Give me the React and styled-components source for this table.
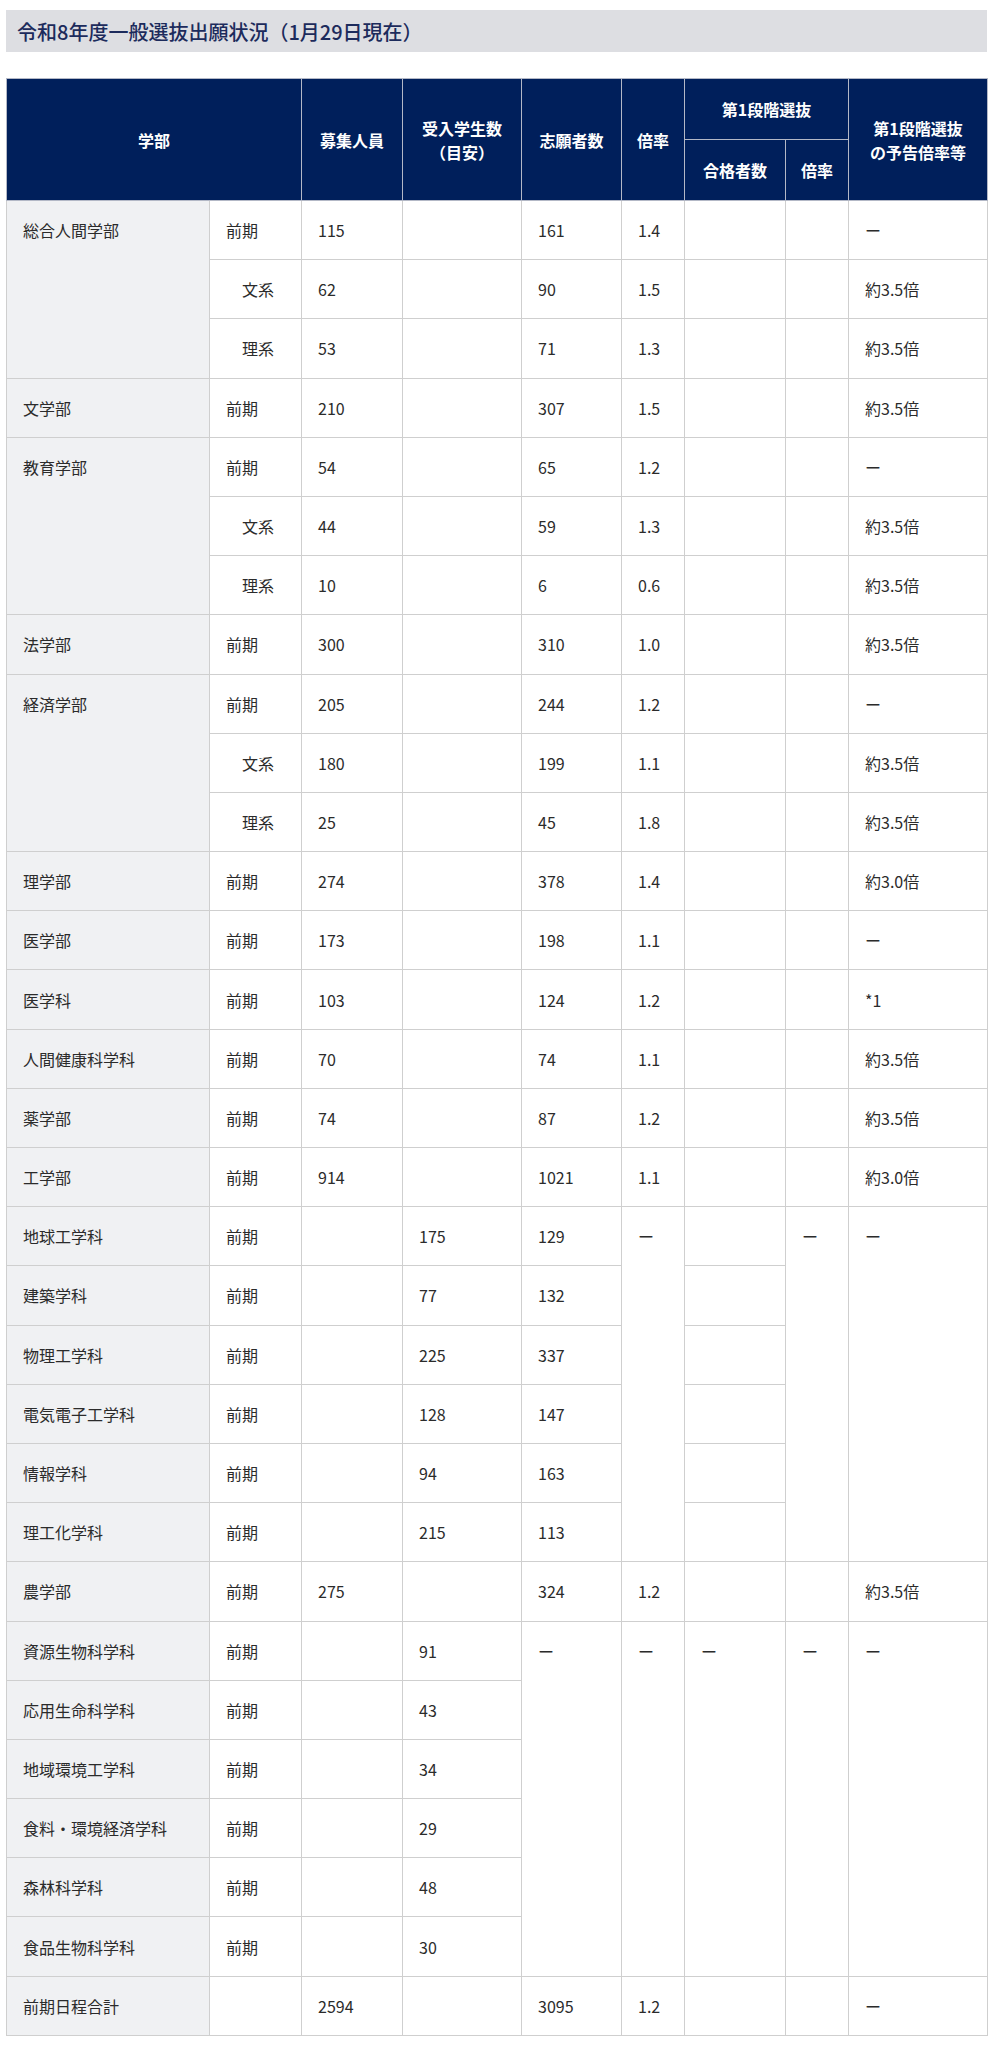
import React from 'react';
import styled, { createGlobalStyle } from 'styled-components';

const Global = createGlobalStyle`
  html, body { margin: 0; padding: 0; background: #fff; }
  body { font-family: "Noto Sans CJK JP", "Noto Sans", sans-serif; color: #333; }
`;

const Page = styled.div`
  width: 981px;
  padding: 10px 9px 14px 6px;
`;

const TitleBar = styled.h2`
  margin: 0 0 26px;
  height: 42px;
  display: flex;
  align-items: center;
  padding: 0 11px;
  background: #dddee2;
  color: #1c2b5c;
  font-size: 20px;
  font-weight: 500;
  letter-spacing: 0;
`;

const Table = styled.table`
  width: 981px;
  table-layout: fixed;
  border-collapse: collapse;
  font-size: 16px;
  line-height: 24px;
`;

const Th = styled.th`
  background: #001f5b;
  color: #fff;
  font-weight: 700;
  text-align: center;
  vertical-align: middle;
  padding: 18px 6px;
  border: 1px solid #b3b8c6;
`;

const Td = styled.td`
  background: ${(p) => (p.$name ? '#f0f1f3' : '#fff')};
  color: #2b2b2b;
  text-align: left;
  vertical-align: top;
  padding: 17.1px 16px 17.1px ${(p) => (p.$indent ? '32px' : '16px')};
  border: 1px solid #cfcfcf;
  white-space: nowrap;
`;

const widths = [203, 92, 101, 119, 100, 63, 101, 63, 139];

const D = 'ー';
const A = '約3.5倍';
const B = '約3.0倍';

const c = (t, o = {}) => ({ t, ...o });

const std = (name, vals) => [c(name, { name: true }), c('前期'), ...vals.map((v) => c(v))];

const rows = [
  [c('総合人間学部', { name: true, rs: 3 }), c('前期'), c('115'), c(''), c('161'), c('1.4'), c(''), c(''), c(D)],
  [c('文系', { indent: true }), c('62'), c(''), c('90'), c('1.5'), c(''), c(''), c(A)],
  [c('理系', { indent: true }), c('53'), c(''), c('71'), c('1.3'), c(''), c(''), c(A)],
  std('文学部', ['210', '', '307', '1.5', '', '', A]),
  [c('教育学部', { name: true, rs: 3 }), c('前期'), c('54'), c(''), c('65'), c('1.2'), c(''), c(''), c(D)],
  [c('文系', { indent: true }), c('44'), c(''), c('59'), c('1.3'), c(''), c(''), c(A)],
  [c('理系', { indent: true }), c('10'), c(''), c('6'), c('0.6'), c(''), c(''), c(A)],
  std('法学部', ['300', '', '310', '1.0', '', '', A]),
  [c('経済学部', { name: true, rs: 3 }), c('前期'), c('205'), c(''), c('244'), c('1.2'), c(''), c(''), c(D)],
  [c('文系', { indent: true }), c('180'), c(''), c('199'), c('1.1'), c(''), c(''), c(A)],
  [c('理系', { indent: true }), c('25'), c(''), c('45'), c('1.8'), c(''), c(''), c(A)],
  std('理学部', ['274', '', '378', '1.4', '', '', B]),
  std('医学部', ['173', '', '198', '1.1', '', '', D]),
  std('医学科', ['103', '', '124', '1.2', '', '', '*1']),
  std('人間健康科学科', ['70', '', '74', '1.1', '', '', A]),
  std('薬学部', ['74', '', '87', '1.2', '', '', A]),
  std('工学部', ['914', '', '1021', '1.1', '', '', B]),
  [c('地球工学科', { name: true }), c('前期'), c(''), c('175'), c('129'), c(D, { rs: 6 }), c(''), c(D, { rs: 6 }), c(D, { rs: 6 })],
  [c('建築学科', { name: true }), c('前期'), c(''), c('77'), c('132'), c('')],
  [c('物理工学科', { name: true }), c('前期'), c(''), c('225'), c('337'), c('')],
  [c('電気電子工学科', { name: true }), c('前期'), c(''), c('128'), c('147'), c('')],
  [c('情報学科', { name: true }), c('前期'), c(''), c('94'), c('163'), c('')],
  [c('理工化学科', { name: true }), c('前期'), c(''), c('215'), c('113'), c('')],
  std('農学部', ['275', '', '324', '1.2', '', '', A]),
  [c('資源生物科学科', { name: true }), c('前期'), c(''), c('91'), c(D, { rs: 6 }), c(D, { rs: 6 }), c(D, { rs: 6 }), c(D, { rs: 6 }), c(D, { rs: 6 })],
  [c('応用生命科学科', { name: true }), c('前期'), c(''), c('43')],
  [c('地域環境工学科', { name: true }), c('前期'), c(''), c('34')],
  [c('食料・環境経済学科', { name: true }), c('前期'), c(''), c('29')],
  [c('森林科学科', { name: true }), c('前期'), c(''), c('48')],
  [c('食品生物科学科', { name: true }), c('前期'), c(''), c('30')],
  [c('前期日程合計', { name: true }), c(''), c('2594'), c(''), c('3095'), c('1.2'), c(''), c(''), c(D)],
];

export default function App() {
  return (
    <>
      <Global />
      <Page>
        <TitleBar>令和8年度一般選抜出願状況（1月29日現在）</TitleBar>
        <Table>
          <colgroup>
            {widths.map((w, i) => (
              <col key={i} style={{ width: w }} />
            ))}
          </colgroup>
          <thead>
            <tr>
              <Th colSpan={2} rowSpan={2}>学部</Th>
              <Th rowSpan={2}>募集人員</Th>
              <Th rowSpan={2}>受入学生数<br />（目安）</Th>
              <Th rowSpan={2}>志願者数</Th>
              <Th rowSpan={2}>倍率</Th>
              <Th colSpan={2}>第1段階選抜</Th>
              <Th rowSpan={2}>第1段階選抜<br />の予告倍率等</Th>
            </tr>
            <tr>
              <Th>合格者数</Th>
              <Th>倍率</Th>
            </tr>
          </thead>
          <tbody>
            {rows.map((r, i) => (
              <tr key={i}>
                {r.map((cell, j) => (
                  <Td key={j} rowSpan={cell.rs} $name={cell.name} $indent={cell.indent}>
                    {cell.t}
                  </Td>
                ))}
              </tr>
            ))}
          </tbody>
        </Table>
      </Page>
    </>
  );
}
